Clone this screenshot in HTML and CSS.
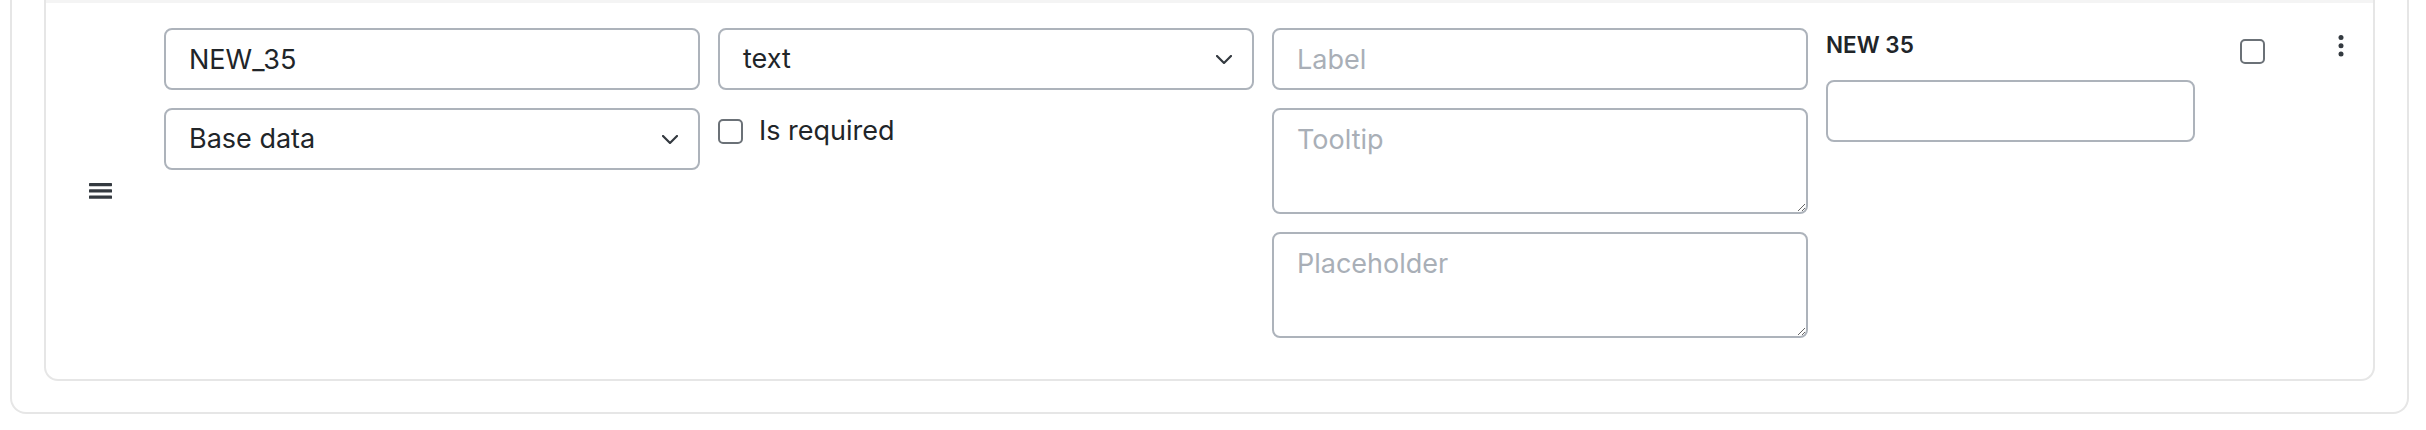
FILE: index.html
```html
<!DOCTYPE html>
<html lang="en">
<head>
<meta charset="utf-8">
<title>Field editor</title>
<link rel="stylesheet" href="styles.css">
</head>
<body>
<div class="outer">
  <div class="inner">
    <div class="inner-strip"></div>
    <div class="field-row">
      <div class="handle">
        <svg width="23" height="16" viewBox="0 0 23 16" aria-hidden="true">
          <rect x="0" y="0" width="23" height="3.2" rx="0.6" fill="#343a40"/>
          <rect x="0" y="6.3" width="23" height="3.2" rx="0.6" fill="#343a40"/>
          <rect x="0" y="12.6" width="23" height="3.2" rx="0.6" fill="#343a40"/>
        </svg>
      </div>
      <div class="col">
        <input class="control" type="text" value="NEW_35">
        <div class="control select">
          <span>Base data</span>
          <svg class="chev" width="16" height="9" viewBox="0 0 16 9" aria-hidden="true"><path d="M1 1l7 7 7-7" fill="none" stroke="#343a40" stroke-width="2.2" stroke-linecap="round" stroke-linejoin="round"/></svg>
        </div>
      </div>
      <div class="col">
        <div class="control select">
          <span>text</span>
          <svg class="chev" width="16" height="9" viewBox="0 0 16 9" aria-hidden="true"><path d="M1 1l7 7 7-7" fill="none" stroke="#343a40" stroke-width="2.2" stroke-linecap="round" stroke-linejoin="round"/></svg>
        </div>
        <label class="check-row">
          <input class="check" type="checkbox">
          <span>Is required</span>
        </label>
      </div>
      <div class="col">
        <input class="control" type="text" placeholder="Label">
        <textarea class="control area" placeholder="Tooltip"></textarea>
        <textarea class="control area" placeholder="Placeholder"></textarea>
      </div>
      <div class="col preview">
        <div class="preview-label">NEW 35</div>
        <input class="control" type="text">
      </div>
      <input class="check check-side" type="checkbox">
      <div class="kebab">
        <svg width="6" height="24" viewBox="0 0 6 24" aria-hidden="true">
          <circle cx="3" cy="3.5" r="2.5" fill="#343a40"/>
          <circle cx="3" cy="11.7" r="2.5" fill="#343a40"/>
          <circle cx="3" cy="19.9" r="2.5" fill="#343a40"/>
        </svg>
      </div>
    </div>
  </div>
</div>
</body>
</html>
```
FILE: styles.css
```css
* { box-sizing: border-box; }

html, body {
  margin: 0;
  padding: 0;
  background: #ffffff;
}

body {
  font-family: Inter, "Liberation Sans", sans-serif;
  font-size: 27px;
  line-height: 1.5;
  color: #212529;
}

.outer {
  margin: 0 17px 0 10px;
  border: 2px solid #e6e6e6;
  border-top: 0;
  border-radius: 0 0 16px 16px;
  padding: 0 32px 31px 32px;
}

.inner {
  border: 2px solid #e6e6e6;
  border-top: 0;
  border-radius: 0 0 14px 14px;
  overflow: hidden;
}

.inner-strip {
  height: 3px;
  background: #f4f4f4;
}

.field-row {
  display: flex;
  align-items: flex-start;
  padding: 25px 0 41px 0;
}

.handle {
  align-self: center;
  display: flex;
  padding: 0 52px 0 43px;
  margin-top: -25px;
  margin-bottom: -41px;
}

.handle svg { display: block; }

.col {
  width: 536px;
  margin-right: 18px;
  display: flex;
  flex-direction: column;
  gap: 18px;
}

.control {
  display: block;
  width: 100%;
  height: 62px;
  margin: 0;
  padding: 0 23px;
  border: 2px solid #adb3bb;
  border-radius: 8px;
  background: #ffffff;
  font-family: inherit;
  font-size: 27px;
  line-height: 1.5;
  color: #212529;
  outline: none;
}

.control::placeholder {
  color: #a9afb7;
  opacity: 1;
}

.select {
  display: flex;
  align-items: center;
  justify-content: space-between;
  padding-right: 20px;
}

.chev { display: block; }

.area {
  height: 106px;
  padding-top: 10px;
  resize: vertical;
}

.check-row {
  display: flex;
  align-items: center;
  gap: 16px;
  margin-top: 3px;
}

.check {
  appearance: none;
  -webkit-appearance: none;
  width: 25px;
  height: 25px;
  margin: 0;
  border: 2px solid #6b7177;
  border-radius: 5px;
  background: #ffffff;
  flex: none;
}

.preview {
  width: 369px;
  margin-right: 0;
  gap: 0;
}

.preview-label {
  font-size: 22.5px;
  font-weight: 600;
  line-height: 1.5;
  padding-top: 0;
  margin-bottom: 18px;
}

.check-side {
  margin-left: 45px;
  margin-top: 11px;
}

.kebab {
  margin-left: 73px;
  margin-top: 6px;
}

.kebab svg { display: block; }
```
